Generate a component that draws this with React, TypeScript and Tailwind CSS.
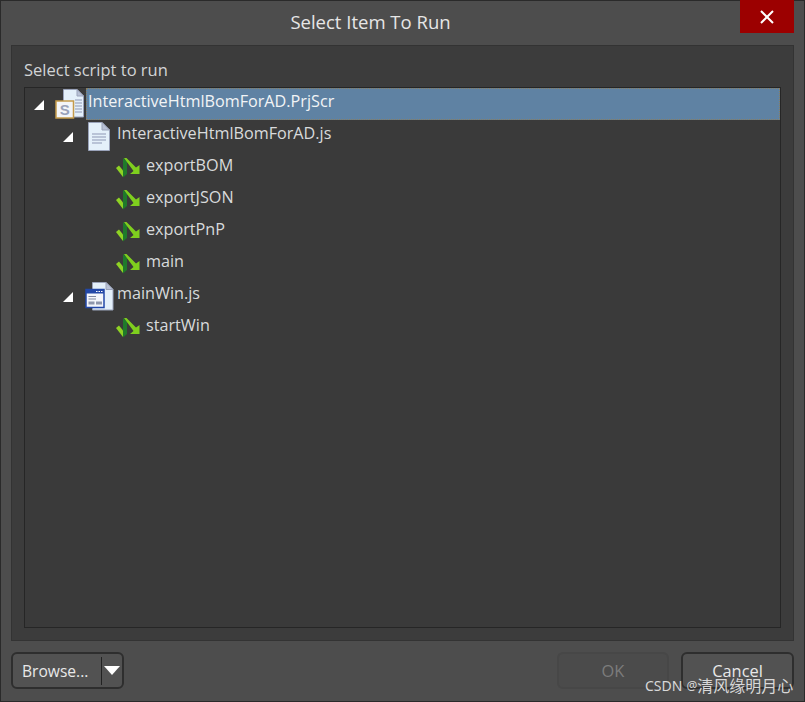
import type { ReactNode } from 'react';

const font = { fontFamily: '"Open Sans", "Noto Sans", sans-serif' };

function Caret() {
  return (
    <svg width="12" height="12" viewBox="0 0 12 12" className="mt-[2px] shrink-0">
      <path d="M11 1V11H1Z" fill="#fff" />
    </svg>
  );
}

function PageIcon() {
  return (
    <svg width="22" height="29" viewBox="0 0 22 29" className="ml-[14px] shrink-0">
      <path d="M.5.5H14L21.5 8V28.5H.5Z" fill="#e4f0fa" stroke="#9aa3ba" />
      <path d="M14 .5V8H21.5Z" fill="#b9c2d6" stroke="#9aa3ba" />
      <path d="M4 12H18M4 15H18M4 18H18M4 21H14" stroke="#8e97b4" strokeWidth="1" />
    </svg>
  );
}

function ProjectIcon() {
  return (
    <svg width="29" height="30" viewBox="0 0 29 30" className="ml-[10px] shrink-0">
      <path d="M8.5.5H22L28.5 7V28H8.5Z" fill="#e4f0fa" stroke="#9aa3ba" />
      <path d="M22 .5V7H28.5Z" fill="#b9c2d6" stroke="#9aa3ba" />
      <path d="M20 11H27M20 14H27M20 17H27M20 20H27M20 23H27" stroke="#8e97b4" />
      <rect x="1" y="12" width="17.5" height="17" fill="#f3f5f8" stroke="#c49a4a" strokeWidth="1.5" />
      <text x="9.7" y="26" textAnchor="middle" fontSize="15" fontWeight="700" fill="#9aa3ba" fontFamily="Liberation Sans, sans-serif">S</text>
    </svg>
  );
}

function WindowIcon() {
  return (
    <svg width="29" height="29" viewBox="0 0 29 29" className="ml-[11px] shrink-0">
      <path d="M7.5.5H21L28 7.5V28H7.5Z" fill="#e4f0fa" stroke="#9aa3ba" />
      <path d="M21 .5V7.5H28Z" fill="#b9c2d6" stroke="#9aa3ba" />
      <rect x="1" y="7.5" width="18" height="18" fill="#f4f6fb" stroke="#2348a8" strokeWidth="1.5" />
      <rect x="1" y="7.5" width="18" height="4" fill="#2348a8" />
      <path d="M11 9.5H12.5M13.5 9.5H15M16 9.5H17.5" stroke="#fff" />
      <path d="M3.5 14.5H11M3.5 17H11" stroke="#7f87a0" />
      <rect x="3.5" y="19.5" width="6" height="3" fill="#8e96ab" />
      <rect x="11" y="19.5" width="6" height="3" fill="#8e96ab" />
    </svg>
  );
}

function FunctionIcon() {
  return (
    <svg width="25" height="20" viewBox="0 0 25 20" className="shrink-0">
      <path d="M0 10L3 7.5L7 12.5V19Z" fill="#8fd324" />
      <path d="M7 0V19.5L11 16V3.5Z" fill="#1f7a2a" />
      <path d="M8 0H10.5L20 9.5L23.5 7V16H14L17.5 13Z" fill="#7fcf1e" />
    </svg>
  );
}

function Row({ indent, icon, label, labelGap, caret, selected }: { indent: string; icon: ReactNode; label: string; labelGap: string; caret?: boolean; selected?: boolean }) {
  return (
    <div className={`flex h-8 items-center ${indent}`}>
      {caret && <Caret />}
      {icon}
      <span
        className={`flex h-8 items-center pb-[6px] text-[16.2px] ${labelGap} ${
          selected ? 'flex-1 border border-dotted border-[#8a7f62] bg-[#5f82a3] pl-px text-[#f2f4f6]' : 'text-[#d8dadc]'
        }`}
      >
        {label}
      </span>
    </div>
  );
}

export default function App() {
  return (
    <div style={font} className="flex h-[702px] w-[805px] flex-col border border-[#2a2a2a] bg-[#4d4d4d] px-[10px]">
      <div className="relative flex h-[44px] shrink-0 items-center justify-center pb-[2px] pr-[64px] text-[18.5px] text-[#e6e6e6]">
        Select Item To Run
        <div className="absolute -top-px right-0 flex h-[33px] w-[54px] items-center justify-center bg-[#9c0000]">
          <svg width="14" height="14" viewBox="0 0 14 14">
            <path d="M1 1L13 13M13 1L1 13" stroke="#fff" strokeWidth="2" />
          </svg>
        </div>
      </div>

      <div className="flex h-[596px] flex-col border border-[#333333] bg-[#3c3c3c] px-3 pb-3 pt-[11px]">
        <div className="h-[30px] text-[16.5px] leading-[25px] text-[#d2d4d6]">Select script to run</div>
        <div className="flex-1 border border-[#262626] bg-[#3a3a3a]">
          <Row indent="pl-[8px]" caret selected icon={<ProjectIcon />} labelGap="ml-[2px]" label="InteractiveHtmlBomForAD.PrjScr" />
          <Row indent="pl-[37px]" caret icon={<PageIcon />} labelGap="ml-[7px]" label="InteractiveHtmlBomForAD.js" />
          <Row indent="pl-[91px]" icon={<FunctionIcon />} labelGap="ml-[5px]" label="exportBOM" />
          <Row indent="pl-[91px]" icon={<FunctionIcon />} labelGap="ml-[5px]" label="exportJSON" />
          <Row indent="pl-[91px]" icon={<FunctionIcon />} labelGap="ml-[5px]" label="exportPnP" />
          <Row indent="pl-[91px]" icon={<FunctionIcon />} labelGap="ml-[5px]" label="main" />
          <Row indent="pl-[37px]" caret icon={<WindowIcon />} labelGap="ml-[3px]" label="mainWin.js" />
          <Row indent="pl-[91px]" icon={<FunctionIcon />} labelGap="ml-[5px]" label="startWin" />
        </div>
      </div>

      <div className="flex flex-1 items-center justify-between pb-px">
        <div className="flex h-[37px] w-[113px] items-center rounded-[6px] border-2 border-[#2e2e2e] bg-[#525252] text-[#e8e8e8]">
          <span className="w-[88px] pl-[9px] pt-[2px] text-[15.6px]">Browse...</span>
          <span className="h-[28px] w-px bg-[#222222]" />
          <svg width="16" height="9" viewBox="0 0 16 9" className="ml-[2px]">
            <path d="M0 0H16L8 9Z" fill="#fff" />
          </svg>
        </div>
        <div className="flex gap-3 text-[16.4px]">
          <div className="flex h-[37px] w-[112px] items-center justify-center rounded-[6px] border-2 border-[#474747] bg-[#4b4b4b] pt-[2px] text-[#7c7c7c]">OK</div>
          <div className="flex h-[37px] w-[113px] items-center justify-center rounded-[6px] border-2 border-[#2e2e2e] bg-[#525252] pt-[2px] text-[#e8e8e8]">Cancel</div>
        </div>
      </div>

      <div
        style={{ fontFamily: '"Noto Sans", "Noto Sans CJK SC", sans-serif' }}
        className="absolute left-[645px] top-[676px] flex items-center text-[14px] leading-[20px] text-[#d8d8d8]"
      >
        <span>CSDN</span>
        <span className="ml-[4px] text-[12px]">@</span>
        <span className="text-[16px]">清风缘明月心</span>
      </div>
    </div>
  );
}
